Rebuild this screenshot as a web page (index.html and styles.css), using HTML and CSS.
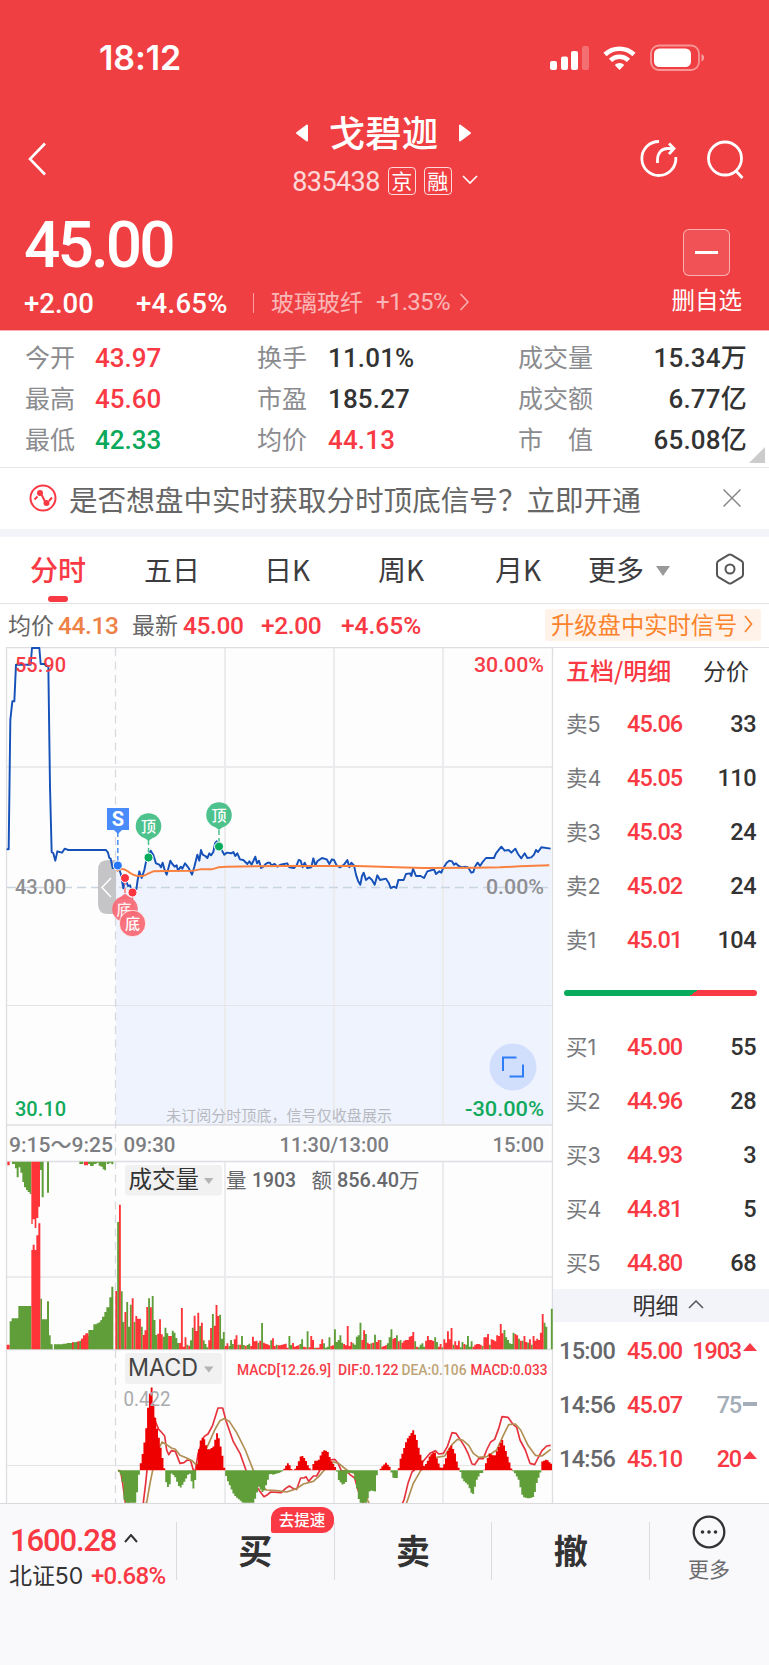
FILE: index.html
```
<!DOCTYPE html>
<html lang="zh-CN">
<head>
<meta charset="utf-8">
<title>戈碧迦 835438</title>
<link rel="stylesheet" href="styles.css">
</head>
<body>
<div class="app">
  <header class="hero">
    <div class="status">
      <span class="clock">18:12</span>
      <svg class="status-icons" width="158" height="30" viewBox="549 42 158 30">
        <g fill="#fff">
          <rect x="551" y="61" width="7" height="9" rx="2"/>
          <rect x="562" y="56.500" width="7" height="13.500" rx="2"/>
          <rect x="572" y="51" width="7" height="19" rx="2"/>
          <rect x="583" y="46" width="7" height="24" rx="2" opacity=".25"/>
          <path d="M620.500 70l-4.800-5a7 7 0 0 1 9.600 0z"/>
          <rect x="655" y="48.500" width="37" height="18.500" rx="5.500"/>
          <path d="M702.500 54c3.500 1.500 3.500 6 0 7.500z" opacity=".5"/>
        </g>
        <g fill="none" stroke="#fff">
          <path d="M606 54.500a21 21 0 0 1 29 0M611.500 60.300a13 13 0 0 1 18 0" stroke-width="4.600"/>
          <rect x="652" y="45.500" width="48" height="24.500" rx="8" stroke-width="1.800" opacity=".45"/>
        </g>
      </svg>
    </div>
    <div class="titlebar">
      <svg class="back" width="20" height="34" viewBox="0 0 20 34"><path d="M18 1.500L3 17l15 15.500" fill="none" stroke="#fff" stroke-width="2.600"/></svg>
      <div class="names">
        <div class="name-row">
          <svg width="14" height="18" viewBox="0 0 14 18"><path d="M12 1.500v15L2 9z" fill="#fff" stroke="#fff" stroke-width="2" stroke-linejoin="round"/></svg>
          <h1 class="name">戈碧迦</h1>
          <svg width="14" height="18" viewBox="0 0 14 18"><path d="M2 1.500v15L12 9z" fill="#fff" stroke="#fff" stroke-width="2" stroke-linejoin="round"/></svg>
        </div>
        <div class="code-row">
          <span class="code">835438</span><span class="tag">京</span><span class="tag">融</span>
          <svg width="16" height="10" viewBox="0 0 16 10"><path d="M1 1l7 7 7-7" fill="none" stroke="#fff" stroke-width="1.600"/></svg>
        </div>
      </div>
      <svg class="tools" width="106" height="42" viewBox="640 139 106 42" fill="none" stroke="#fff" stroke-width="2.800">
        <path d="M660 142.500a17 17 0 1 0 16.800 15.500M658.500 164v-3c0-7 4-11.500 10-11.500h6M670 144.500l5 5-5 5.500"/>
        <circle cx="726" cy="159.500" r="16.500"/><path d="M736.500 171.500l7 7.500"/>
      </svg>
    </div>
    <div class="quote">
      <div class="quote-main">
        <div class="price">45.00</div>
        <div class="change">
          <span class="c1">+2.00</span><span class="c2">+4.65%</span><i class="bar"></i>
          <span class="sector">玻璃玻纤</span><span class="sector-pct">+1.35%</span>
          <svg width="10" height="18" viewBox="0 0 10 18"><path d="M1.500 1L9 9l-7.500 8" fill="none" stroke="#fff" stroke-opacity=".6" stroke-width="1.500"/></svg>
        </div>
      </div>
      <div class="remove"><div class="remove-box"><i></i></div><span>删自选</span></div>
    </div>
  </header>

  <section class="stats">
    <b>今开</b><span class="red">43.97</span><b>换手</b><span class="mid">11.01%</span><b>成交量</b><span class="end">15.34<em>万</em></span>
    <b>最高</b><span class="red">45.60</span><b>市盈</b><span class="mid">185.27</span><b>成交额</b><span class="end">6.77<em>亿</em></span>
    <b>最低</b><span class="green">42.33</span><b>均价</b><span class="red mid">44.13</span><b>市　值</b><span class="end">65.08<em>亿</em></span>
    <i class="corner"></i>
  </section>

  <section class="notice">
    <svg width="28" height="28" viewBox="0 0 28 28" fill="none" stroke="#f93943" stroke-width="2"><circle cx="14" cy="14" r="12.500"/><path d="M5.500 15.500l3-3M12.500 10.500l3.500 7M20 17l3-3.500"/><circle cx="11" cy="9" r="2" fill="#f93943"/><circle cx="17.500" cy="19" r="2" fill="#f93943"/></svg>
    <span>是否想盘中实时获取分时顶底信号？立即开通</span>
    <svg width="18" height="18" viewBox="0 0 18 18"><path d="M.5.500l17 17M17.500.500l-17 17" stroke="#888" stroke-width="1.500"/></svg>
  </section>

  <nav class="tabs">
    <span class="t1 active">分时</span><span class="t2">五日</span><span class="t3">日K</span><span class="t4">周K</span><span class="t5">月K</span><span class="t6">更多<i class="caret"></i></span>
    <svg width="30" height="32" viewBox="0 0 30 32" fill="none" stroke="#555" stroke-width="2"><path d="M13.500 1.800q1.500-.8 3 0l10 6q1.500 1 1.500 2.600v11.200q0 1.600-1.500 2.600l-10 6q-1.500.8-3 0l-10-6Q2 23.200 2 21.600V10.400Q2 8.800 3.500 7.800z"/><circle cx="15" cy="16" r="4.500"/></svg>
  </nav>

  <section class="summary">
    <em>均价</em><span class="orange s1">44.13</span><em>最新</em><span class="red s2">45.00</span><span class="red s3">+2.00</span><span class="red s4">+4.65%</span>
    <div class="upgrade">升级盘中实时信号<svg width="9" height="18" viewBox="0 0 9 18"><path d="M1 1l6.500 8L1 17" fill="none" stroke="#fb832c" stroke-width="1.700"/></svg></div>
  </section>

  <main class="board">
    <svg class="chart" width="554" height="857" viewBox="0 647 554 857">
      <rect x="6" y="647" width="547" height="857" fill="#fdfdfe"/>
      <g transform="translate(0 640) scale(.33333)">
        <path fill="#eef3fe" d="M347 1455V680L362 700 370 745 376 715 384 738 397 758 409 748 418 694 425 714 433 690 440 656 452 632 468 670 488 674 500 704 511 662 534 692 555 670 576 704 592 644 598 662 603 630 622 654 640 636 650 604 673 644 700 636 742 672 766 650 783 684 804 668 840 680V1455z"/>
        <path fill="#eef3fe" transform="translate(810 0)" d="M0 1455V670L58 682 86 660 112 684 130 655 156 654 186 658 210 682 232 660 252 676 271 734 281 698 314 734 322 706 348 716 362 744 379 744 385 720 401 720 429 686 438 708 462 714 492 688 514 698 538 662 576 682 604 698 623 668 648 654 672 654 694 620 724 638 736 626 754 655 784 652 814 622 844 626V1455z"/>
      </g>
      <g fill="none" stroke="#ececee" stroke-width="2">
        <path d="M7 767H552M7 1277H552M225 648V1125M334 648V1125M443 648V1125M225 1162V1503M334 1162V1503M443 1162V1503"/>
        <path d="M7 1005.500H552M7 1465.500H552" stroke="#e4e4e7" stroke-width="1"/>
      </g>
      <path d="M6.500 1503V647.500H769M6.500 1125H552.500M6.500 1161.500H552.500M6.500 1349.500H552.500M552.500 647V1503" fill="none" stroke="#dedee2" stroke-width="1.300"/>
      <path d="M115.500 648V1503" stroke="#d9dadd" stroke-width="1.300" stroke-dasharray="8 5.500"/>
      <path d="M7 887.500H552" stroke="#c9d5e0" stroke-width="1.300" stroke-dasharray="9 5"/>
      <path d="M116 860h-8q-10 0-10 10v34q0 10 10 10h8z" fill="#c5c5c7"/>
      <path d="M111 878l-9 9.500 9 9.500" fill="none" stroke="#fff" stroke-width="1.500"/>

      <g transform="translate(0 640) scale(.33333)" fill="none" stroke-linejoin="round" stroke-width="5.800">
        <path stroke="#1551b8" d="M20 628H26L31 240 37 184H43L48 74H92L96 24H118L122 72H134L138 78H145L150 440 155 636 160 640 166 662 172 634 186 638 194 626 205 630H318L324 638 328 654 332 656 338 684 354 678 362 700 370 745 376 715 384 738 390 736 397 758 403 752 409 748 413 720 418 694 425 714 433 690 440 656 452 632 460 645 468 670 478 674 483 682 488 668 494 690 500 704 511 662 517 672 524 680 530 676 534 692 542 680 547 686 555 670 560 676 566 684 576 704 583 680 592 644 598 662 603 630 608 644 616 648 622 654 628 640 633 646 640 636 645 610 650 604 657 618 665 630 673 644 680 638 694 640 700 636 706 648 712 640 720 658 730 660 742 672 748 664 755 674 766 650 771 670 777 662 783 684 790 680 797 672 804 668 810 668 814 676"/>
        <path stroke="#1551b8" transform="translate(810 0)" d="M4 676L14 672 22 680 32 674 42 672 52 670 58 682 72 684 76 680 80 676 86 660 92 662 98 682 104 668 112 684 124 682 130 655 136 676 142 664 156 654 170 658 178 672 186 658 192 660 200 676 210 682 222 674 232 660 238 682 244 668 252 676 258 704 264 722 271 734 276 708 281 698 288 720 298 712 306 720 314 734 322 706 330 720 348 716 356 728 362 744 372 740 379 744 385 720 401 720 408 702 420 700 424 708 429 686 438 708 452 708 462 714 472 694 486 690 492 688 498 702 508 694 514 698 518 688 530 668 538 662 546 664 552 674 558 670 566 678 576 682 586 680 594 682 604 698 610 696 616 678 623 668 630 678 638 666 648 654 672 654 678 640 694 620 704 632 716 630 724 638 736 626 744 642 754 655 764 640 772 654 784 652 792 644 798 630 804 636 814 622 842 626"/>
        <path stroke="#f9803f" d="M350 694Q365 680 382 693T410 707L430 708 446 700 460 694 500 693 580 692 600 688 635 688 655 682 680 680 840 678 1070 678 1190 682 1270 684 1430 683 1500 682 1560 679 1648 676"/>
      </g>

      <g class="num" font-size="21">
        <text x="15" y="672" fill="#f63c46" textLength="51" lengthAdjust="spacingAndGlyphs">55.90</text>
        <text x="474" y="672" fill="#f63c46" textLength="70" lengthAdjust="spacingAndGlyphs">30.00%</text>
        <text x="15" y="894" fill="#8e8f92" textLength="51" lengthAdjust="spacingAndGlyphs">43.00</text>
        <text x="486" y="894" fill="#8e8f92" textLength="58" lengthAdjust="spacingAndGlyphs">0.00%</text>
        <text x="15" y="1116" fill="#11a95c" textLength="51" lengthAdjust="spacingAndGlyphs">30.10</text>
        <text x="465" y="1116" fill="#11a95c" textLength="79" lengthAdjust="spacingAndGlyphs">-30.00%</text>
        <g fill="#7d7e81">
          <text x="9" y="1152" textLength="104" lengthAdjust="spacingAndGlyphs">9:15～9:25</text>
          <text x="123.500" y="1152" textLength="52" lengthAdjust="spacingAndGlyphs">09:30</text>
          <text x="279.500" y="1152" textLength="109.500" lengthAdjust="spacingAndGlyphs">11:30/13:00</text>
          <text x="492.500" y="1152" textLength="51.500" lengthAdjust="spacingAndGlyphs">15:00</text>
        </g>
      </g>
      <text class="cjk" x="166" y="1121" font-size="15" fill="#b7b9be" textLength="226">未订阅分时顶底，信号仅收盘展示</text>
      <circle cx="513" cy="1067" r="23.500" fill="#d2dffc"/>
      <path d="M503 1071v-13.500h13.500M523 1064.500v12h-13.500" fill="none" stroke="#2e7cf6" stroke-width="2"/>

      <g fill="none" stroke-width="1.500" stroke-dasharray="5 3">
        <path d="M117.800 832V864" stroke="#4b8df8"/><path d="M148.500 840V856M219 830V845" stroke="#4cc08b"/><path d="M125 880V896M132.500 894V910" stroke="#f77"/>
      </g>
      <path d="M107 808h22v22h-7l-4 4-4-4h-7z" fill="#4a8bfb"/>
      <text class="num s-mark" x="118" y="826" text-anchor="middle">S</text>
      <g fill="#4dc28d"><circle cx="148.500" cy="826" r="12.800"/><path d="M142 836h13l-6.500 5z"/><circle cx="219" cy="815" r="12.800"/><path d="M212.500 825h13l-6.500 5z"/></g>
      <g fill="#f86b76" fill-opacity=".93"><path d="M118 899l7-5.500 7 5.500z"/><circle cx="125" cy="909" r="12.800"/><path d="M125.500 914l7-6 7 6z"/></g>
      <g class="cjk" font-size="15" font-weight="500" fill="#fff" text-anchor="middle"><text x="148.500" y="831.500">顶</text><text x="219" y="820.500">顶</text><text x="124" y="914.500" opacity=".9">底</text></g>
      <circle cx="132.500" cy="923.500" r="13.200" fill="#f86b76" fill-opacity=".95" stroke="#fff" stroke-width=".8"/>
      <text class="cjk" font-size="15" font-weight="500" fill="#fff" text-anchor="middle" x="132.500" y="929">底</text>
      <g stroke="#fff"><circle cx="117.800" cy="865.500" r="4.500" fill="#2677fa"/><g fill="#07ab5c"><circle cx="148.500" cy="857.500" r="4.500"/><circle cx="219" cy="846.500" r="4.500"/></g><g fill="#fb3440"><circle cx="125" cy="878" r="4.500"/><circle cx="132.500" cy="892.500" r="4.500"/></g></g>

      <g transform="translate(0 1150) scale(.33333)">
        <path fill="#609e3a" d="M24 598H29V514H35V505H55V468H94V598zM121 598V446H126V508H141V454H147V556H152V583H158V598zM162 598V583H188V581H200V579H216V577H226V576H238V572H243V566H249V558H265V540H280V523H290V520H296V517H301V510H306V500H313V486H319V472H328V442H334V410H340V598zM36 35V42H45V55H50V82H56V52H61V68H67V96H72V112H78V120H83V126H89V132H94V35zM120 35V60H125V142H131V35zM141 35V128H147V35zM238 35V42H250V35zM264 35V42H270V48H281V42H290V38H296V47H302V50H308V58H313V61H318V35zM320 35V42H328V38H334V43H340V35z"/>
        <path fill="#fe3438" d="M20 598V584H29V598zM94 598V300H98V284H104V300H109V256H115V220H121V598zM243 598V566H249V556H256V550H265V598zM216 598V577H221V598zM232 598V574H238V598zM94 35V222H98V208H104V234H109V204H115V170H120V35zM22 35V46H29V35zM252 35V46H264V35z"/>
      </g>
      <g id="volume" transform="translate(0 1150) scale(.33333)"></g>

      <clipPath id="macd-clip"><rect x="7" y="1351" width="545" height="152"/></clipPath>
      <g clip-path="url(#macd-clip)">
        <g transform="translate(100 1350) scale(.33333)">
          <g fill="none" stroke-width="5" stroke-linejoin="round">
            <path stroke="#e5323c" d="M54 361L62 364 68 400 76 458 100 600 130 458 137 400 143 340 150 240 160 200 176 238 184 246 194 258 200 300 206 314 214 302 226 304 240 340 252 338 262 330 272 332 280 361 286 361 294 312 312 260 324 252 338 226 354 174 368 174 378 212 400 275 420 310 438 361 470 410 484 430 492 440 500 436 512 426 544 428 556 416 568 408 580 416 590 418 602 384 612 384 618 380 626 394 640 378 650 378 660 360 674 345 690 330 704 328 714 340 724 362 740 364 750 374 764 384 780 440 796 470 860 520 900 475 912 450 924 400 936 366 960 345 990 310 1006 302 1016 312 1030 310 1042 290 1056 248 1068 250 1080 268 1094 290 1104 310 1116 342 1124 344 1136 326 1150 326 1160 300 1172 276 1184 268 1196 236 1206 200 1224 202 1240 224 1250 232 1260 270 1276 300 1290 340 1304 344 1314 324 1326 302 1340 288 1352 286"/>
            <path stroke="#b18e52" d="M54 361L66 370 90 480 140 458 150 400 158 361 170 310 186 276 200 284 214 294 226 298 240 316 260 324 276 332 290 346 304 320 322 290 344 240 360 212 372 206 388 214 410 248 436 300 460 361 480 408 500 420 530 422 560 426 590 416 610 402 640 394 656 380 680 352 700 336 716 340 740 360 764 370 780 400 806 458 820 490 900 500 920 458 940 400 962 362 985 340 1010 322 1034 318 1056 284 1072 268 1088 270 1106 286 1120 310 1136 322 1160 320 1190 300 1210 256 1226 224 1246 222 1262 240 1284 286 1306 316 1326 318 1352 298"/>
          </g>
          <g id="macd"></g>
        </g>
      </g>

      <rect x="125" y="1165" width="97" height="30.500" rx="3" fill="#f1f1f2"/>
      <text class="cjk" x="128.500" y="1188" font-size="23.500" fill="#333" textLength="70.500">成交量</text>
      <path d="M204 1178h9.500l-4.700 6z" fill="#b3b3b5"/>
      <g font-size="20.500" fill="#67686b">
        <text class="cjk" x="226" y="1188">量</text><text class="num" x="252" y="1187" textLength="44" lengthAdjust="spacingAndGlyphs">1903</text>
        <text class="cjk" x="311.500" y="1188">额</text><text class="num" x="337" y="1187" textLength="62" lengthAdjust="spacingAndGlyphs">856.40</text><text class="cjk" x="399" y="1188">万</text>
      </g>
      <rect x="125" y="1353" width="97" height="31" rx="3" fill="#f1f1f2"/>
      <text class="latin" x="128" y="1376" font-size="24.500" fill="#444" textLength="70" lengthAdjust="spacingAndGlyphs">MACD</text>
      <path d="M204 1366.500h9.500l-4.700 6z" fill="#b3b3b5"/>
      <g class="num" font-size="15" fill="#f63c46">
        <text x="237" y="1374.500" textLength="94" lengthAdjust="spacingAndGlyphs">MACD[12.26.9]</text>
        <text x="338" y="1374.500" textLength="60.500" lengthAdjust="spacingAndGlyphs">DIF:0.122</text>
        <text x="401.500" y="1374.500" textLength="65" lengthAdjust="spacingAndGlyphs" fill="#bda477">DEA:0.106</text>
        <text x="470.500" y="1374.500" textLength="77" lengthAdjust="spacingAndGlyphs">MACD:0.033</text>
      </g>
      <text x="123.500" y="1405.500" class="thin" font-size="19.500" fill="#aaabad" textLength="47" lengthAdjust="spacingAndGlyphs">0.422</text>
    </svg>

    <aside class="book">
      <div class="book-tabs"><span class="on">五档/明细</span><span>分价</span></div>
      <div class="row"><span>卖5</span><b>45.06</b><i>33</i></div>
      <div class="row"><span>卖4</span><b>45.05</b><i>110</i></div>
      <div class="row"><span>卖3</span><b>45.03</b><i>24</i></div>
      <div class="row"><span>卖2</span><b>45.02</b><i>24</i></div>
      <div class="row"><span>卖1</span><b>45.01</b><i>104</i></div>
      <div class="ratio"></div>
      <div class="row"><span>买1</span><b>45.00</b><i>55</i></div>
      <div class="row"><span>买2</span><b>44.96</b><i>28</i></div>
      <div class="row"><span>买3</span><b>44.93</b><i>3</i></div>
      <div class="row"><span>买4</span><b>44.81</b><i>5</i></div>
      <div class="row"><span>买5</span><b>44.80</b><i>68</i></div>
      <div class="detail-head">明细<svg width="16" height="9" viewBox="0 0 16 9"><path d="M1 8l7-7 7 7" fill="none" stroke="#555" stroke-width="1.500"/></svg></div>
      <div class="tick"><span>15:00</span><b>45.00</b><i class="red">1903</i><u class="up"></u></div>
      <div class="tick"><span>14:56</span><b>45.07</b><i class="flat">75</i><u class="dash"></u></div>
      <div class="tick"><span>14:56</span><b>45.10</b><i class="red">20</i><u class="up"></u></div>
    </aside>
  </main>

  <footer class="actions">
    <div class="index">
      <div class="index-value">1600.28<svg width="14" height="9" viewBox="0 0 14 9"><path d="M1 8l6-7 6 7" fill="none" stroke="#333" stroke-width="2"/></svg></div>
      <div class="index-name"><em>北证50</em><span>+0.68%</span></div>
    </div>
    <div class="act">买<span class="badge">去提速</span></div>
    <div class="act">卖</div>
    <div class="act">撤</div>
    <div class="more">
      <svg width="34" height="34" viewBox="0 0 34 34"><circle cx="17" cy="17" r="15.300" fill="none" stroke="#333" stroke-width="2.300"/><g fill="#333"><circle cx="10.500" cy="17" r="1.800"/><circle cx="17" cy="17" r="1.800"/><circle cx="23.500" cy="17" r="1.800"/></g></svg>
      <span>更多</span>
    </div>
  </footer>
</div>
<script src="chart.js"></script>
</body>
</html>
```
FILE: styles.css
```
* { box-sizing: border-box; }
body { margin: 0; background: #fff; font-family: Roboto, "Noto Sans CJK SC", sans-serif; color: #333; }
em, i, u { font-style: normal; text-decoration: none; }
svg { display: block; flex: none; }
.app { width: 769px; height: 1665px; overflow: hidden; display: flex; flex-direction: column; }
.red { color: #f93943; }
.green { color: #0ba95b; }
.orange { color: #ee8145; }

.hero { height: 331px; background: #f03f42; color: #fff; flex: none; border-bottom: 1px solid #f9b0b2; }
.status { height: 72px; padding: 42px 63px 0 99px; display: flex; justify-content: space-between; }
.clock { font: 600 34px/32px Inter, sans-serif; letter-spacing: -.1px; }
.titlebar { height: 133px; padding: 0 24px 0 27px; display: flex; align-items: flex-start; justify-content: space-between; }
.back { margin-top: 70px; }
.tools { margin-top: 66px; }
.names { padding: 39px 0 0 84px; display: flex; flex-direction: column; align-items: center; }
.name-row { display: flex; align-items: center; gap: 19.5px; height: 42px; margin-right: 3px; }
.name-row svg { margin-top: 2px; }
.name { margin: 0; font: 500 36.500px/42px "Noto Sans CJK SC", sans-serif; }
.code-row { display: flex; align-items: center; height: 30px; margin-top: 13px; gap: 8px; }
.code { font-size: 27px; letter-spacing: -.6px; opacity: .8; padding-top: 1px; }
.tag { width: 28px; height: 28px; margin-top: -1px; border: 1.500px solid rgba(255,255,255,.8); border-radius: 4px; font: 21px/24px "Noto Sans CJK SC", sans-serif; text-align: center; }
.code-row svg { margin-left: 2px; margin-top: -2px; }
.quote { display: flex; justify-content: space-between; padding: 0 27px 0 24px; }
.price { font-size: 64px; font-weight: 500; line-height: 74px; letter-spacing: -2.900px; margin-top: 4px; }
.change { display: flex; align-items: center; height: 30px; margin-top: 5px; font-weight: 500; font-size: 27.500px; letter-spacing: .3px; }
.c1 { width: 112px; letter-spacing: 0; }
.c2 { width: 117px; }
.bar { width: 1px; height: 20px; background: rgba(255,255,255,.5); margin-right: 17px; margin-top: -1px; }
.sector { font: 23px/30px "Noto Sans CJK SC", sans-serif; letter-spacing: 0; opacity: .62; width: 105px; margin-top: -4px; }
.sector-pct { font-size: 24px; font-weight: 400; opacity: .62; width: 83px; letter-spacing: -.7px; margin-top: -2px; }
.change svg { margin-top: -3px; }
.remove { display: flex; flex-direction: column; align-items: center; padding-top: 24px; font: 23.500px/30px "Noto Sans CJK SC", sans-serif; }
.remove-box { width: 47px; height: 47px; border: 1px solid rgba(255,255,255,.55); border-radius: 6px; background: rgba(255,255,255,.1); display: grid; place-items: center; margin-bottom: 8px; }
.remove-box i { width: 23px; height: 3px; background: #fff; }

.stats { height: 137px; flex: none; padding: 7px 22px 0 25px; display: grid; grid-template-columns: 70px 162px 71px 190px 90px 1fr; grid-auto-rows: 41px; line-height: 41px; border-bottom: 1px solid #e8e8ea; position: relative; }
.stats b { font: 25px/37px "Noto Sans CJK SC", sans-serif; color: #8b8c8f; }
.stats span { font-size: 26px; font-weight: 500; letter-spacing: 0; white-space: nowrap; }
.stats .mid { letter-spacing: .15px; }
.stats em { font: 500 26px/1 "Noto Sans CJK SC", sans-serif; }
.stats .end { text-align: right; letter-spacing: .2px; }
.corner { position: absolute; right: 4px; bottom: 4px; border: 8px solid; border-color: transparent #ccc #ccc transparent; }

.notice { height: 61px; flex: none; display: flex; align-items: center; padding: 0 28px 0 29px; font: 28.600px/60px "Noto Sans CJK SC", sans-serif; color: #666; }
.notice svg { margin-top: -1px; }
.notice span { margin-left: 12px; flex: 1; white-space: nowrap; }
.tabs { height: 75px; flex: none; border-top: 8px solid #f3f4f9; border-bottom: 1px solid #e2e2e5; display: flex; align-items: center; font: 28px/64px "Noto Sans CJK SC", sans-serif; padding: 0 0 2px 30px; color: #3c3c3f; }
.t1 { width: 114px; }
.t2 { width: 120px; }
.t3 { width: 114px; }
.t4 { width: 117px; }
.t5 { width: 93px; }
.t6 { width: 127px; display: flex; align-items: center; }
.active { color: #f93943; font-weight: 500; position: relative; }
.active::after { content: ""; position: absolute; left: 18px; bottom: -1px; width: 20px; height: 6px; border-radius: 3px; background: #f93943; }
.caret { border: 7px solid transparent; border-top: 10px solid #999; border-bottom: 0; margin-left: 12px; margin-top: 3px; }

.summary { height: 43px; flex: none; display: flex; align-items: center; padding: 0 8px; font-size: 24.500px; font-weight: 500; letter-spacing: -.4px; }
.summary em { font: 23px/40px "Noto Sans CJK SC", sans-serif; letter-spacing: 0; width: 50px; color: #666; margin-top: -3px; }
.summary .s1 { width: 74px; }
.summary .s2 { width: 79px; padding-left: 1px; }
.s3 { width: 80px; }
.s4 { flex: 1; letter-spacing: 0; }
.upgrade { height: 32px; width: 216px; margin-top: -2px; background: #fff2e9; border-radius: 3px; color: #fb832c; font: 23.300px/30px "Noto Sans CJK SC", sans-serif; letter-spacing: 0; display: flex; align-items: center; justify-content: space-between; padding: 0 8px 1px 6px; }

.board { display: flex; flex: none; height: 856px; }
.chart { overflow: hidden; }
.num { font-family: Roboto, "Noto Sans CJK SC", sans-serif; font-weight: 500; }
.s-mark { font-size: 20px; font-weight: 700; fill: #fff; }
.thin { font-family: Roboto, sans-serif; }
.cjk { font-family: "Noto Sans CJK SC", sans-serif; }
.latin { font-family: Inter, sans-serif; }
.book { flex: 1; border-top: 1px solid #dedee2; height: 856px; font-size: 23.500px; font-weight: 500; letter-spacing: -.95px; }
.book-tabs { height: 49px; padding: 0 20px 0 12px; display: flex; justify-content: space-between; font: 23px/44px "Noto Sans CJK SC", sans-serif; letter-spacing: 0; }
.on { color: #f93943; font-weight: 500; font-size: 24px; }
.row, .tick { display: flex; height: 54px; line-height: 54px; align-items: center; }
.row { padding: 0 13px 0 12px; }
.row span { font: 21.500px/54px Inter, "Noto Sans CJK SC", sans-serif; letter-spacing: 0; color: #77787b; width: 61px; }
.row b, .tick b { color: #f93943; font-weight: 500; }
.row i { flex: 1; text-align: right; letter-spacing: -.5px; }
.ratio { height: 6px; margin: 23px 12px 24px 10px; border-radius: 3px; background: linear-gradient(145deg, #07ab5c 66.500%, #f93943 66.500%); }
.detail-head { height: 33px; background: #f3f4f9; margin: -1px 0 2px -1px; display: flex; align-items: center; justify-content: center; gap: 9px; font: 23px/31px "Noto Sans CJK SC", sans-serif; letter-spacing: 0; padding: 0 0 2px 14px; }
.tick { padding-left: 5px; }
.tick span { color: #66676a; width: 68px; letter-spacing: -.7px; }
.tick b { width: 56px; }
.tick i { width: 58px; display: flex; justify-content: flex-end; letter-spacing: -1.200px; }
.tick u { margin-left: 2px; width: 14px; }
.flat { color: #a5adb8; }
.up { border: 7px solid transparent; border-bottom: 8px solid #f93943; border-top: 0; margin-top: -8px; }
.dash { height: 4px; background: #a5adb8; margin-top: -3px; }

.actions { flex: 1; background: #f9f9fc; border-top: 1px solid #d9d9de; display: flex; padding-top: 18px; min-height: 0; }
.index { width: 177px; height: 58px; border-right: 1px solid #dcdce0; padding-left: 10px; flex: none; }
.index-value { display: flex; align-items: center; gap: 8px; height: 36px; color: #f93943; font-size: 31px; font-weight: 500; letter-spacing: -1.150px; }
.index-value svg { margin-top: -4px; }
.index-name { display: flex; align-items: center; height: 36px; font-size: 24px; font-weight: 500; color: #f93943; letter-spacing: -.7px; }
.index-name em { color: #333; font: 23px/36px Inter, "Noto Sans CJK SC", sans-serif; letter-spacing: -.1px; width: 82px; margin-left: -1px; white-space: nowrap; }
.act { width: 157.700px; height: 58px; flex: none; border-right: 1px solid #dcdce0; text-align: center; font: 700 34px/56px "Noto Sans CJK SC", sans-serif; position: relative; }
.badge { position: absolute; left: 93.500px; top: -15px; width: 63px; height: 26px; border-radius: 12px 12px 12px 2px; background: #f93943; color: #fff; font: 500 15.500px/24px "Noto Sans CJK SC", sans-serif; }
.more { flex: 1; display: flex; flex-direction: column; align-items: center; margin-top: -7px; padding-right: 1px; font: 21px/28px "Noto Sans CJK SC", sans-serif; color: #6b6b6e; }
.more span { margin-top: 5px; }
```
FILE: chart.js
```
const NS = "http://www.w3.org/2000/svg";
const STEP = 5.45;

function addPath(parent, d, fill) {
  const p = document.createElementNS(NS, "path");
  p.setAttribute("d", d);
  p.setAttribute("fill", fill);
  parent.appendChild(p);
}

// One entry per trading minute: r = up, g = down, followed by bar height.
const volume = ("r175 g382 r434 g174 g82 r112 g142 g68 g134 r153 g82 r100 r92 r92 g68 r43 r57 r127 g153 r126 g160 g88 g43 r47 r90 r45 g38 g65 g48 r40 " +
 "r40 g56 g50 g34 g19 r19 r124 r8 r36 g14 r11 g27 g65 r101 r55 r110 g70 r80 g27 g16 g6 r27 r64 g106 r71 r133 r100 g104 g32 g52 " +
 "r10 r18 g10 g28 g16 r30 r42 g14 r14 g40 g13 r10 g13 g17 r10 r38 r24 r26 g20 r26 g79 r20 r17 r15 r12 g27 r33 r10 g14 r12 " +
 "r12 r14 r15 r17 r5 g40 g13 r19 r8 r10 r12 g16 g30 r8 r6 g54 r6 r40 r28 g5 r5 r5 r16 r30 g18 g5 g8 g36 r10 r12 " +
 "g60 g22 g28 g42 g20 r16 r12 r70 r10 r22 g18 g14 g38 g42 g80 r28 r57 g46 r20 r16 g18 r20 g44 r22 r28 g28 r8 r10 r12 g18 " +
 "g36 g60 r32 r34 g42 r24 g28 r20 r26 r28 r28 r38 r40 r52 g24 r8 g6 g14 g18 g8 r26 r40 r28 r28 r25 g36 g22 r8 r16 g6 " +
 "r30 r20 r54 r30 r64 g14 r24 r12 r26 g6 g22 r16 g14 g40 g8 g24 r8 r14 r16 r16 r14 g10 r36 r36 r46 g14 r30 r28 r24 r42 " +
 "r40 r76 r48 g58 g36 g28 g18 g16 g50 r46 r42 g32 r26 g26 r40 r22 g20 r30 g14 r40 r26 r32 r28 r50 r106 g80 g68 g0 g0 g122").split(" ");
const vol = { r: "", g: "" };
volume.forEach((v, i) => {
  const h = +v.slice(1);
  vol[v[0]] += `M${(346 + i * 5.467).toFixed(1)} 598v${-h}h5.600v${h}z`;
});
const volumeLayer = document.getElementById("volume");
addPath(volumeLayer, vol.g, "#609e3a");
addPath(volumeLayer, vol.r, "#fe3438");

// Histogram envelope, sampled once per bar around the zero line.
const env = [54,361,66,380,74,458,108,458,118,361,120,350,130,300,138,240,146,150,154,105,160,160,168,220,178,270,186,315,194,361,200,410,208,412,214,370,224,378,240,416,256,390,268,366,280,416,290,370,292,320,304,262,312,265,322,298,330,298,340,290,352,246,360,280,368,320,374,361,380,385,402,435,428,458,462,458,476,410,490,430,500,400,510,370,520,374,545,366,550,361,556,350,565,338,575,358,582,361,590,350,604,314,616,328,626,352,636,361,642,332,655,332,666,306,674,300,684,306,692,330,706,352,710,361,716,390,728,405,738,396,744,368,760,370,768,400,778,458,800,458,810,420,826,425,832,361,838,361,846,350,858,338,870,352,872,361,880,384,892,384,895,361,900,330,908,308,920,270,932,252,940,240,950,268,960,310,972,348,980,340,990,316,1004,304,1014,336,1024,358,1034,340,1044,300,1054,286,1064,306,1074,350,1080,361,1088,390,1104,404,1118,438,1130,390,1142,368,1150,370,1154,350,1168,310,1184,318,1206,268,1220,310,1234,356,1236,361,1244,368,1256,390,1268,440,1286,446,1302,440,1310,400,1320,370,1324,361,1326,335,1340,328,1352,340,1358,345];
const ZERO = 361;
const hist = { up: "", down: "" };
let k = 0;
for (let x = 54; x < 1354; x += STEP) {
  const mid = x + STEP / 2;
  while (env[k + 2] < mid) k += 2;
  const t = (mid - env[k]) / (env[k + 2] - env[k]);
  const h = env[k + 1] + t * (env[k + 3] - env[k + 1]) - ZERO;
  hist[h < 0 ? "up" : "down"] += `M${x.toFixed(1)} ${ZERO}v${h.toFixed(1)}h5.600v${(-h).toFixed(1)}z`;
}
const macdLayer = document.getElementById("macd");
addPath(macdLayer, hist.down, "#609e3a");
addPath(macdLayer, hist.up, "#ee0000");
```
